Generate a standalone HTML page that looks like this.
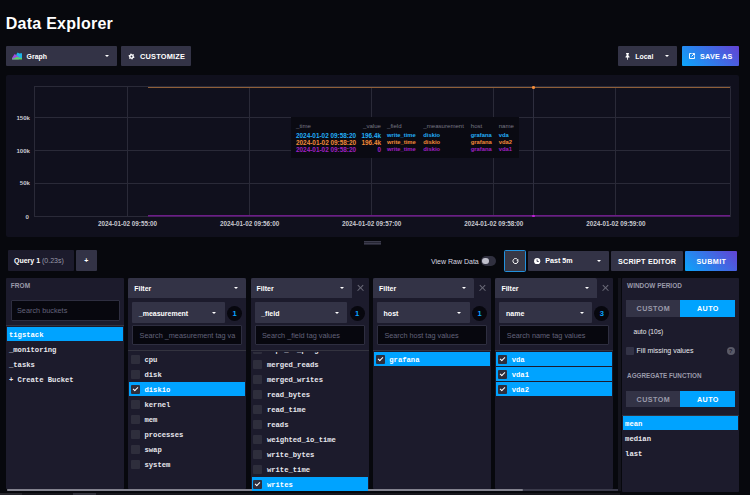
<!DOCTYPE html>
<html><head><meta charset="utf-8">
<style>
*{margin:0;padding:0;box-sizing:border-box}
html,body{width:750px;height:495px;overflow:hidden;background:#07080d}
body{position:relative;font-family:"Liberation Sans",sans-serif;color:#fff}
.a{position:absolute}
.t{position:absolute;white-space:nowrap;line-height:1}
.btn{position:absolute;background:#333346;border-radius:1px}
.mono{font-family:"Liberation Mono",monospace}
.caret{position:absolute;width:0;height:0;border-left:2px solid transparent;border-right:2px solid transparent;border-top:2.2px solid #fff}
.gh{position:absolute;height:1px;background:#2a2a38}
.gv{position:absolute;width:1px;background:#2a2a38}
.yl{position:absolute;font-size:6.1px;font-weight:bold;color:#c8c8d0;text-align:right;width:30px;line-height:1}
.xl{position:absolute;font-size:6.3px;font-weight:bold;color:#c8c8d0;width:80px;text-align:center;line-height:1}
.panel{position:absolute;top:277.7px;height:211.3px;background:#1c1b2c;border-radius:1px}
.fhead{position:absolute;left:0;top:0;height:20.5px;background:#333346;border-radius:2px 2px 0 0}
.drop{position:absolute;top:24.8px;height:20.5px;background:#333346;border-radius:1px}
.badge{position:absolute;top:28px;width:15px;height:15px;border-radius:50%;background:#07070e;color:#0aa4ff;font-size:7.6px;font-weight:bold;text-align:center;line-height:15px}
.search{position:absolute;top:47.5px;height:20.6px;background:#07070e;border:1px solid #2e2e40;border-radius:1px}
.sep{position:absolute;left:0;right:0;top:72.6px;height:1px;background:#33333f}
.row{position:absolute;height:14px;left:1px;right:1px}
.row.sel{background:#00a3ff}
.cb{position:absolute;left:1.8px;top:2.6px;width:8.8px;height:8.8px;background:#2e2e3c;border-radius:1px}
.row .lbl{position:absolute;left:15.3px;top:1px;line-height:14px;font-family:"Liberation Mono",monospace;font-weight:bold;font-size:7.2px;color:#e8e8ee}
.row.sel .lbl{color:#fff}
.chk{position:absolute;left:1.8px;top:2px;width:5px;height:3px;border-left:1.2px solid #fff;border-bottom:1.2px solid #fff;transform:rotate(-45deg)}
.x{position:absolute;top:7.5px;width:5.6px;height:5.6px}
.x:before,.x:after{content:"";position:absolute;left:2.3px;top:-1px;width:1px;height:7.6px;background:#6c6c7a}
.x:before{transform:rotate(45deg)}.x:after{transform:rotate(-45deg)}
</style></head><body>

<!-- title -->
<div class="t" style="left:5.8px;top:15.9px;font-size:16px;font-weight:bold;color:#fff;letter-spacing:0.25px">Data Explorer</div>

<!-- Graph dropdown -->
<div class="btn" style="left:6px;top:46px;width:111px;height:20px"></div>
<svg class="a" style="left:12px;top:52px" width="10.2" height="7.6" viewBox="0 0 10.2 7.6">
 <path d="M4.3 2.6 L5.6 0.5 L7.5 1.6 L8.8 1.3 L10.2 1.1 L10.2 5.9 L4.3 5.9Z" fill="#1eb4e8"/>
 <path d="M0 6.1 L2.7 1.9 L4.8 3.5 L6.7 4.8 L6.7 7.5 L0 7.5Z" fill="#a04fe0"/>
 <path d="M0.2 6.7 L2.9 5.9 L4.8 4.8 L6.7 5.6 L10.2 5.9 L10.2 7.5 L0.2 7.5Z" fill="#5ed26a"/>
</svg>
<div class="t" style="left:26.6px;top:53.9px;font-size:6.9px;font-weight:bold">Graph</div>
<div class="caret" style="left:104.5px;top:55px"></div>

<!-- customize -->
<div class="btn" style="left:121px;top:46px;width:70px;height:20px"></div>
<svg class="a" style="left:127.8px;top:53px" width="7" height="7" viewBox="0 0 7 7"><path d="M6.47 3.89 L6.27 4.65 L5.32 4.90 L4.90 5.32 L4.65 6.27 L3.89 6.47 L3.20 5.78 L2.62 5.62 L1.67 5.88 L1.12 5.33 L1.38 4.38 L1.22 3.80 L0.53 3.11 L0.73 2.35 L1.68 2.10 L2.10 1.68 L2.35 0.73 L3.11 0.53 L3.80 1.22 L4.38 1.38 L5.33 1.12 L5.88 1.67 L5.62 2.62 L5.78 3.20Z" fill="#fff"/><circle cx="3.5" cy="3.5" r="0.95" fill="#333346"/></svg>
<div class="t" style="left:140px;top:53px;font-size:7.4px;font-weight:bold;letter-spacing:0.2px">CUSTOMIZE</div>

<!-- Local -->
<div class="btn" style="left:618px;top:46px;width:59px;height:20px"></div>
<svg class="a" style="left:625px;top:53px" width="5" height="7" viewBox="0 0 5 7"><path d="M1 0h3v0.8h-0.5v2l1 1v0.7H0.5v-0.7l1-1v-2H1z M2.1 4.4h0.8v2.4h-0.8z" fill="#fff"/></svg>
<div class="t" style="left:635.3px;top:53.7px;font-size:6.9px;font-weight:bold">Local</div>
<div class="caret" style="left:664.5px;top:55px"></div>

<!-- Save as -->
<div class="a" style="left:681.5px;top:46px;width:57.5px;height:20px;background:linear-gradient(45deg,#0ba6fb,#6342d4);border-radius:1px"></div>
<svg class="a" style="left:688.8px;top:53px" width="6" height="6" viewBox="0 0 6 6"><path d="M2.6 0.5H0.5V5.5H5.5V3.4" fill="none" stroke="#fff" stroke-width="0.95"/><path d="M3.4 0.5H5.5V2.6 M5.3 0.7L2.6 3.4" fill="none" stroke="#fff" stroke-width="0.95"/></svg>
<div class="t" style="left:700px;top:53px;font-size:7.2px;font-weight:bold;letter-spacing:0.25px">SAVE AS</div>

<!-- chart panel -->
<div class="a" style="left:6px;top:74.5px;width:733px;height:162.5px;background:#10101d;border-radius:2px"></div>
<!-- grid -->
<div class="gh" style="left:34px;top:86px;width:697px"></div>
<div class="gh" style="left:34px;top:117px;width:697px"></div>
<div class="gh" style="left:34px;top:150px;width:697px"></div>
<div class="gh" style="left:34px;top:183px;width:697px"></div>
<div class="gh" style="left:34px;top:216px;width:697px"></div>
<div class="gv" style="left:34px;top:86px;height:131px"></div>
<div class="gv" style="left:127px;top:86px;height:131px"></div>
<div class="gv" style="left:249px;top:86px;height:131px"></div>
<div class="gv" style="left:371px;top:86px;height:131px"></div>
<div class="gv" style="left:493px;top:86px;height:131px"></div>
<div class="gv" style="left:615px;top:86px;height:131px"></div>
<div class="gv" style="left:730px;top:86px;height:131px"></div>
<!-- lines -->
<div class="a" style="left:147.5px;top:86.8px;width:582.5px;height:1.3px;background:#8f5f38"></div>
<div class="a" style="left:147.5px;top:215px;width:582.5px;height:1px;background:#6c1c86"></div><div class="a" style="left:147.5px;top:216px;width:582.5px;height:1px;background:#4c2064"></div>
<div class="gv" style="left:533px;top:87px;height:129px;background:#2e2e3e"></div>
<div class="a" style="left:532.3px;top:86.2px;width:2.6px;height:2.4px;border-radius:50%;background:#f48b38"></div>
<div class="a" style="left:532.2px;top:214.6px;width:2.8px;height:2.8px;border-radius:50%;background:#c21fd8"></div>
<!-- y labels -->
<div class="yl" style="left:0;top:114.5px">150k</div>
<div class="yl" style="left:0;top:147.5px">100k</div>
<div class="yl" style="left:0;top:180.1px">50k</div>
<div class="yl" style="left:-1px;top:213.8px">0</div>
<!-- x labels -->
<div class="xl" style="left:87.5px;top:221.1px">2024-01-02 09:55:00</div>
<div class="xl" style="left:209.6px;top:221.1px">2024-01-02 09:56:00</div>
<div class="xl" style="left:331.7px;top:221.1px">2024-01-02 09:57:00</div>
<div class="xl" style="left:453.8px;top:221.1px">2024-01-02 09:58:00</div>
<div class="xl" style="left:575.9px;top:221.1px">2024-01-02 09:59:00</div>

<!-- tooltip -->
<div class="a" style="left:291.3px;top:117px;width:227.4px;height:40.8px;background:#0a0a12"></div>
<div class="a" id="tt" style="left:0;top:0">
<div class="t" style="left:296px;top:123.4px;font-size:6.1px;color:#767684">_time</div>
<div class="t" style="left:341px;width:40px;text-align:right;top:123.4px;font-size:6.1px;color:#767684">_value</div>
<div class="t" style="left:387px;top:123.4px;font-size:6.1px;color:#767684">_field</div>
<div class="t" style="left:423.3px;top:123.4px;font-size:6.1px;color:#767684">_measurement</div>
<div class="t" style="left:470.8px;top:123.4px;font-size:6.1px;color:#767684">host</div>
<div class="t" style="left:498.7px;top:123.4px;font-size:6.1px;color:#767684">name</div>
<div class="t" style="left:296px;top:132.5px;font-size:6.4px;font-weight:bold;color:#22adf6">2024-01-02 09:58:20</div>
<div class="t" style="left:341px;width:40px;text-align:right;top:132.5px;font-size:6.4px;font-weight:bold;color:#22adf6">196.4k</div>
<div class="t" style="left:387px;top:132.6px;font-size:5.8px;font-weight:bold;color:#22adf6">write_time</div>
<div class="t" style="left:423.3px;top:132.6px;font-size:5.8px;font-weight:bold;color:#22adf6">diskio</div>
<div class="t" style="left:470.8px;top:132.6px;font-size:5.8px;font-weight:bold;color:#22adf6">grafana</div>
<div class="t" style="left:498.7px;top:132.6px;font-size:5.8px;font-weight:bold;color:#22adf6">vda</div>
<div class="t" style="left:296px;top:140px;font-size:6.4px;font-weight:bold;color:#f48b38">2024-01-02 09:58:20</div>
<div class="t" style="left:341px;width:40px;text-align:right;top:140px;font-size:6.4px;font-weight:bold;color:#f48b38">196.4k</div>
<div class="t" style="left:387px;top:140.1px;font-size:5.8px;font-weight:bold;color:#f48b38">write_time</div>
<div class="t" style="left:423.3px;top:140.1px;font-size:5.8px;font-weight:bold;color:#f48b38">diskio</div>
<div class="t" style="left:470.8px;top:140.1px;font-size:5.8px;font-weight:bold;color:#f48b38">grafana</div>
<div class="t" style="left:498.7px;top:140.1px;font-size:5.8px;font-weight:bold;color:#f48b38">vda2</div>
<div class="t" style="left:296px;top:146.5px;font-size:6.4px;font-weight:bold;color:#a021c2">2024-01-02 09:58:20</div>
<div class="t" style="left:341px;width:40px;text-align:right;top:146.5px;font-size:6.4px;font-weight:bold;color:#a021c2">0</div>
<div class="t" style="left:387px;top:146.6px;font-size:5.8px;font-weight:bold;color:#a021c2">write_time</div>
<div class="t" style="left:423.3px;top:146.6px;font-size:5.8px;font-weight:bold;color:#a021c2">diskio</div>
<div class="t" style="left:470.8px;top:146.6px;font-size:5.8px;font-weight:bold;color:#a021c2">grafana</div>
<div class="t" style="left:498.7px;top:146.6px;font-size:5.8px;font-weight:bold;color:#a021c2">vda1</div>
</div>
<!-- resize handle -->
<div class="a" style="left:363.8px;top:241px;width:17.4px;height:3.8px;background:#262634"></div><div class="a" style="left:363.8px;top:241px;width:17.4px;height:1px;background:#3c3c4c"></div><div class="a" style="left:363.8px;top:243px;width:17.4px;height:1px;background:#3c3c4c"></div>

<!-- query bar -->
<div class="a" style="left:8px;top:250.3px;width:66px;height:20.9px;background:#1c1b2c;border-radius:1px"></div>
<div class="t" style="left:14px;top:257.3px;font-size:7px;font-weight:bold">Query 1 <span style="font-weight:normal;color:#9a9aa8">(0.23s)</span></div>
<div class="btn" style="left:76.3px;top:250.3px;width:20.4px;height:20.9px"></div>
<div class="t" style="left:84.2px;top:257.3px;font-size:7px;font-weight:bold">+</div>

<div class="t" style="left:431px;top:257.5px;font-size:7px;color:#d8d8e0">View Raw Data</div>
<div class="a" style="left:481.3px;top:256px;width:15px;height:10.2px;border-radius:5.1px;background:#30303f"></div>
<div class="a" style="left:482.4px;top:258px;width:6.4px;height:6.4px;border-radius:50%;background:#c0c0cc"></div>

<div class="a" style="left:504.3px;top:250.3px;width:21.4px;height:21.4px;background:#383846;border:1.4px solid #2290dc;border-radius:1.5px"></div>
<svg class="a" style="left:511.6px;top:257.4px" width="7" height="7" viewBox="0 0 7 7"><path d="M5.6 2.6 A2.55 2.55 0 1 0 6.05 3.9" fill="none" stroke="#fff" stroke-width="1"/><path d="M6.3 1.9 L6.3 4 L4.3 3.6Z" fill="#fff"/></svg>

<div class="btn" style="left:527.7px;top:250.5px;width:81.3px;height:20.5px"></div>
<svg class="a" style="left:534.2px;top:257.8px" width="6.4" height="6.4" viewBox="0 0 7 7"><circle cx="3.5" cy="3.5" r="3.4" fill="#fff"/><path d="M3.4 1.5V3.8H5.2" fill="none" stroke="#333346" stroke-width="1"/></svg>
<div class="t" style="left:545.3px;top:257.8px;font-size:7.1px;font-weight:bold">Past 5m</div>
<div class="caret" style="left:596.5px;top:259.5px"></div>

<div class="btn" style="left:611.4px;top:250.5px;width:71.2px;height:20.5px"></div>
<div class="t" style="left:618px;top:257.8px;font-size:7.2px;font-weight:bold;letter-spacing:0.22px">SCRIPT EDITOR</div>

<div class="a" style="left:685px;top:250.5px;width:51.9px;height:20.5px;background:linear-gradient(45deg,#0ba6fb,#6342d4);border-radius:1px"></div>
<div class="t" style="left:696.4px;top:257.9px;font-size:7.2px;font-weight:bold;letter-spacing:0.4px">SUBMIT</div>

<!-- panels placeholder -->
<div id="panels">
<div class="a" style="left:7px;top:489px;width:613px;height:2px;background:#3a3a4a;border-radius:1px"></div>
<div class="a" style="left:7px;top:489px;width:516px;height:2px;background:#82828e;border-radius:1px"></div>
<div class="panel" style="left:6.4px;width:117.6px">
<div class="t" style="left:4.3px;top:5.6px;font-size:6.5px;font-weight:bold;color:#9a9aaa;letter-spacing:0.1px">FROM</div>
<div class="search" style="left:4.3px;top:22.6px;width:108.9px;height:21px"><div class="t" style="left:5.3px;top:6px;font-size:7.3px;color:#62627a">Search buckets</div></div>
<div class="sep" style="top:47.2px"></div>
<div class="row sel" style="top:49.5px;left:0.5px;right:1px"><div class="lbl" style="left:2.1px">tigstack</div></div>
<div class="row" style="top:64.5px;left:0.5px;right:1px"><div class="lbl" style="left:2.1px">_monitoring</div></div>
<div class="row" style="top:79.5px;left:0.5px;right:1px"><div class="lbl" style="left:2.1px">_tasks</div></div>
<div class="row" style="top:94.5px;left:0.5px;right:1px"><div class="lbl" style="left:2.1px">+ Create Bucket</div></div>
</div>
<div class="panel" style="left:128.2px;width:118px">
<div class="fhead" style="width:118px"><div class="t" style="left:6px;top:6.9px;font-size:7px;font-weight:bold">Filter</div><div class="caret" style="left:106px;top:9px"></div></div>
<div class="drop" style="left:4.1px;width:92.8px"><div class="t" style="left:6.5px;top:7.1px;font-size:7px;font-weight:bold">_measurement</div><div class="caret" style="left:80.2px;top:9.3px"></div></div>
<div class="badge" style="left:99px">1</div>
<div class="search" style="left:4.1px;width:110px;height:20.3px"><div class="t" style="left:6.3px;top:6px;font-size:7.3px;color:#62627a">Search _measurement tag va</div></div>
<div class="sep"></div>
<div class="a" style="left:0;right:0;top:74.6px;bottom:-2px;overflow:hidden">
<div class="row" style="top:-0.1px"><div class="cb"></div><div class="lbl">cpu</div></div>
<div class="row" style="top:14.9px"><div class="cb"></div><div class="lbl">disk</div></div>
<div class="row sel" style="top:29.9px"><div class="cb"><div class="chk"></div></div><div class="lbl">diskio</div></div>
<div class="row" style="top:44.9px"><div class="cb"></div><div class="lbl">kernel</div></div>
<div class="row" style="top:59.9px"><div class="cb"></div><div class="lbl">mem</div></div>
<div class="row" style="top:74.9px"><div class="cb"></div><div class="lbl">processes</div></div>
<div class="row" style="top:89.9px"><div class="cb"></div><div class="lbl">swap</div></div>
<div class="row" style="top:104.9px"><div class="cb"></div><div class="lbl">system</div></div>
</div>
</div>
<div class="panel" style="left:250.6px;width:118px">
<div class="fhead" style="width:101.4px"><div class="t" style="left:6px;top:6.9px;font-size:7px;font-weight:bold">Filter</div><div class="caret" style="left:89.4px;top:9px"></div></div>
<div class="x" style="left:107.1px"></div>
<div class="drop" style="left:4.1px;width:92.8px"><div class="t" style="left:6.5px;top:7.1px;font-size:7px;font-weight:bold">_field</div><div class="caret" style="left:80.2px;top:9.3px"></div></div>
<div class="badge" style="left:99px">1</div>
<div class="search" style="left:4.1px;width:110px;height:20.3px"><div class="t" style="left:6.3px;top:6px;font-size:7.3px;color:#62627a">Search _field tag values</div></div>
<div class="sep"></div>
<div class="a" style="left:0;right:0;top:74.6px;bottom:-2px;overflow:hidden">
<div class="row" style="top:-9.9px"><div class="cb"></div><div class="lbl">iops_in_progress</div></div>
<div class="row" style="top:5.1px"><div class="cb"></div><div class="lbl">merged_reads</div></div>
<div class="row" style="top:20.1px"><div class="cb"></div><div class="lbl">merged_writes</div></div>
<div class="row" style="top:35.1px"><div class="cb"></div><div class="lbl">read_bytes</div></div>
<div class="row" style="top:50.1px"><div class="cb"></div><div class="lbl">read_time</div></div>
<div class="row" style="top:65.1px"><div class="cb"></div><div class="lbl">reads</div></div>
<div class="row" style="top:80.1px"><div class="cb"></div><div class="lbl">weighted_io_time</div></div>
<div class="row" style="top:95.1px"><div class="cb"></div><div class="lbl">write_bytes</div></div>
<div class="row" style="top:110.1px"><div class="cb"></div><div class="lbl">write_time</div></div>
<div class="row sel" style="top:125.1px"><div class="cb"><div class="chk"></div></div><div class="lbl">writes</div></div>
</div>
</div>
<div class="panel" style="left:373.0px;width:118px">
<div class="fhead" style="width:101.4px"><div class="t" style="left:6px;top:6.9px;font-size:7px;font-weight:bold">Filter</div><div class="caret" style="left:89.4px;top:9px"></div></div>
<div class="x" style="left:107.1px"></div>
<div class="drop" style="left:4.1px;width:92.8px"><div class="t" style="left:6.5px;top:7.1px;font-size:7px;font-weight:bold">host</div><div class="caret" style="left:80.2px;top:9.3px"></div></div>
<div class="badge" style="left:99px">1</div>
<div class="search" style="left:4.1px;width:110px;height:20.3px"><div class="t" style="left:6.3px;top:6px;font-size:7.3px;color:#62627a">Search host tag values</div></div>
<div class="sep"></div>
<div class="a" style="left:0;right:0;top:74.6px;bottom:-2px;overflow:hidden">
<div class="row sel" style="top:-0.1px"><div class="cb"><div class="chk"></div></div><div class="lbl">grafana</div></div>
</div>
</div>
<div class="panel" style="left:495.4px;width:118px">
<div class="fhead" style="width:101.4px"><div class="t" style="left:6px;top:6.9px;font-size:7px;font-weight:bold">Filter</div><div class="caret" style="left:89.4px;top:9px"></div></div>
<div class="x" style="left:107.1px"></div>
<div class="drop" style="left:4.1px;width:92.8px"><div class="t" style="left:6.5px;top:7.1px;font-size:7px;font-weight:bold">name</div><div class="caret" style="left:80.2px;top:9.3px"></div></div>
<div class="badge" style="left:99px">3</div>
<div class="search" style="left:4.1px;width:110px;height:20.3px"><div class="t" style="left:6.3px;top:6px;font-size:7.3px;color:#62627a">Search name tag values</div></div>
<div class="sep"></div>
<div class="a" style="left:0;right:0;top:74.6px;bottom:-2px;overflow:hidden">
<div class="row sel" style="top:-0.1px"><div class="cb"><div class="chk"></div></div><div class="lbl">vda</div></div>
<div class="row sel" style="top:14.9px"><div class="cb"><div class="chk"></div></div><div class="lbl">vda1</div></div>
<div class="row sel" style="top:29.9px"><div class="cb"><div class="chk"></div></div><div class="lbl">vda2</div></div>
</div>
</div>
<div class="a" style="left:617.8px;top:277.7px;width:3.2px;height:213.5px;background:#14141d"></div>
<div class="panel" style="left:621.6px;width:117.4px;height:214px">
<div class="t" style="left:5.5px;top:5.6px;font-size:6.45px;font-weight:bold;color:#9a9aaa">WINDOW PERIOD</div>
<div class="a" style="left:4.4px;top:22.6px;width:54px;height:17px;background:#333346"></div>
<div class="a" style="left:58.4px;top:22.6px;width:55px;height:17px;background:#00a3ff"></div>
<div class="t" style="left:15px;top:27.8px;font-size:7.2px;font-weight:bold;color:#9a9aaa;letter-spacing:0.45px">CUSTOM</div>
<div class="t" style="left:75.4px;top:27.8px;font-size:7.2px;font-weight:bold;color:#fff;letter-spacing:0.4px">AUTO</div>
<div class="t" style="left:11.9px;top:51.8px;font-size:6.6px;color:#e8e8ee">auto (10s)</div>
<div class="a" style="left:4.6px;top:69.8px;width:7.8px;height:7.7px;background:#333346;border-radius:1px"></div>
<div class="t" style="left:15px;top:69.5px;font-size:7px;color:#e8e8ee">Fill missing values</div>
<div class="a" style="left:105px;top:69.5px;width:8px;height:8px;border-radius:50%;background:#5a5a68;color:#1c1b2c;font-size:6px;font-weight:bold;text-align:center;line-height:8px">?</div>
<div class="t" style="left:5.5px;top:95px;font-size:6.3px;font-weight:bold;color:#9a9aaa">AGGREGATE FUNCTION</div>
<div class="a" style="left:4.6px;top:113px;width:54px;height:16.8px;background:#333346"></div>
<div class="a" style="left:58.6px;top:113px;width:54.5px;height:16.8px;background:#00a3ff"></div>
<div class="t" style="left:15px;top:118.3px;font-size:7.2px;font-weight:bold;color:#9a9aaa;letter-spacing:0.45px">CUSTOM</div>
<div class="t" style="left:75.4px;top:118.3px;font-size:7.2px;font-weight:bold;color:#fff;letter-spacing:0.4px">AUTO</div>
<div class="sep" style="top:136.9px"></div>
<div class="row sel" style="top:138.5px;left:1.2px;right:1.2px"><div class="lbl" style="left:2.3px">mean</div></div>
<div class="row" style="top:153.5px;left:1.2px;right:1.2px"><div class="lbl" style="left:2.3px">median</div></div>
<div class="row" style="top:168.5px;left:1.2px;right:1.2px"><div class="lbl" style="left:2.3px">last</div></div>
</div>
<div class="a" style="left:0;top:492.5px;width:620px;height:2.5px;background:#17171d"></div>
<div class="a" style="left:0;top:492.5px;width:21.7px;height:2.5px;background:#26262c"></div>
<div class="a" style="left:73px;top:492.5px;width:23px;height:2.5px;background:#34343e"></div>
</div><!--/panels-->
</body></html>
